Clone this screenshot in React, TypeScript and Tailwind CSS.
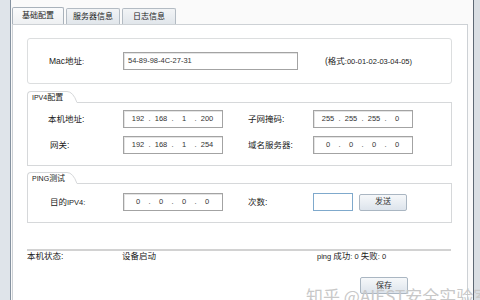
import { Fragment } from "react"

const IpBox = ({ parts }: { parts: string[] }) => (
  <div className="flex h-[18px] w-[100px] items-center border border-[#a3a3a3] bg-white pl-[5px] text-[7.5px] text-[#333] shadow-[inset_1px_1px_0_#e4e4e4]">
    {parts.map((p, i) => (
      <Fragment key={i}>
        {i > 0 && <span className="w-[5px] text-center">.</span>}
        <span className="w-[18px] text-center">{p}</span>
      </Fragment>
    ))}
  </div>
)

const GroupHeader = ({ children }: { children: React.ReactNode }) => (
  <div className="flex h-[12px]">
    <div className="flex w-[40px] items-center rounded-tl-[4px] border-t border-l border-[#d6d8da] pl-[4px] text-[8px] leading-none">
      {children}
    </div>
    <svg width="10" height="12" className="block shrink-0">
      <path d="M0 0.5 Q6 0.5 10 11.5" fill="none" stroke="#d6d8da" strokeWidth="1" />
    </svg>
    <div className="flex-1 border-b border-[#d6d8da]" />
  </div>
)

export default function App() {
  return (
    <div className="relative flex h-[300px] w-[480px] overflow-hidden bg-[#fafafa] font-['Liberation_Sans','Noto_Sans_CJK_SC',sans-serif] text-[8.5px] text-[#222]">
      <div className="w-[11px] shrink-0 border-r border-[#8592a0] bg-[#dfe4ea]" />

      <div className="w-[462px] shrink-0 pl-[1px] pt-[7px]">
        {/* tabs */}
        <div className="flex h-[17px] items-end">
          <div className="flex h-[17px] w-[52px] items-center justify-center rounded-t-[2px] border border-b-0 border-[#a9b2bb] bg-gradient-to-b from-[#fafbfc] to-[#eef0f2] text-[8px]">
            基础配置
          </div>
          <div className="ml-[2px] flex h-[16px] w-[54px] items-center justify-center rounded-t-[2px] border border-b-0 border-[#b3bbc3] bg-gradient-to-b from-[#f2f4f6] to-[#e1e6eb] text-[8px]">
            服务器信息
          </div>
          <div className="ml-[2px] flex h-[16px] w-[54px] items-center justify-center rounded-t-[2px] border border-b-0 border-[#b3bbc3] bg-gradient-to-b from-[#f2f4f6] to-[#e1e6eb] text-[8px]">
            日志信息
          </div>
        </div>

        {/* panel */}
        <div className="h-[290px] w-[456px] border border-[#cdd1d5] bg-white pl-[14px] pt-[13px]">
          {/* mac box */}
          <div className="flex h-[46px] w-[425px] items-center rounded-[3px] border border-[#dcdedf] pl-[21px]">
            <span className="w-[74px]">
              Mac地址<span className="text-[7.5px]">:</span>
            </span>
            <div className="flex h-[18px] w-[175px] items-center border border-[#a3a3a3] bg-white pl-[4px] text-[7.5px] text-[#333] shadow-[inset_1px_1px_0_#e4e4e4]">
              54-89-98-4C-27-31
            </div>
            <span className="ml-[27px]">
              (格式<span className="text-[7.5px]">:00-01-02-03-04-05)</span>
            </span>
          </div>

          {/* ipv4 */}
          <div className="mt-[7px] w-[425px]">
            <GroupHeader>
              <span className="text-[7px]">IPV4</span>配置
            </GroupHeader>
            <div className="h-[63px] border-x border-b border-[#d6d8da] pt-[7px]">
              <div className="flex items-center pl-[20px]">
                <span className="w-[75px]">本机地址:</span>
                <IpBox parts={["192", "168", "1", "200"]} />
                <span className="ml-[25px] w-[65px]">子网掩码:</span>
                <IpBox parts={["255", "255", "255", "0"]} />
              </div>
              <div className="mt-[8px] flex items-center pl-[20px]">
                <span className="w-[75px] pl-[2px]">网关:</span>
                <IpBox parts={["192", "168", "1", "254"]} />
                <span className="ml-[25px] w-[65px]">域名服务器:</span>
                <IpBox parts={["0", "0", "0", "0"]} />
              </div>
            </div>
          </div>

          {/* ping */}
          <div className="mt-[6px] w-[425px]">
            <GroupHeader>
              <span className="text-[7px]">PING</span>测试
            </GroupHeader>
            <div className="h-[39px] border-x border-b border-[#d6d8da] pt-[9px]">
              <div className="flex items-center pl-[22px]">
                <span className="w-[73px]">
                  目的<span className="text-[7.5px]">IPV4:</span>
                </span>
                <IpBox parts={["0", "0", "0", "0"]} />
                <span className="ml-[25px] w-[65px]">次数:</span>
                <div className="h-[18px] w-[40px] border border-[#7fa9cc] bg-white" />
                <button className="ml-[6px] h-[17px] w-[48px] rounded-[2px] border border-[#aab6c2] bg-gradient-to-b from-[#f6f8fa] to-[#dde4ec] text-[8px] text-[#333]">
                  发送
                </button>
              </div>
            </div>
          </div>

          {/* status */}
          <div className="mt-[26px] h-[2px] w-[424px] bg-[#d2d2d2]" />
          <div className="flex h-[11px] items-center">
            <span className="w-[95px]">本机状态:</span>
            <span className="w-[195px]">设备启动</span>
            <span>
              <span className="text-[7.5px]">ping </span>成功<span className="text-[7.5px]">: 0 </span>失败
              <span className="text-[7.5px]">: 0</span>
            </span>
          </div>
          <div className="mt-[15px] pl-[333px]">
            <button className="h-[17px] w-[48px] rounded-[2px] border border-[#aab6c2] bg-gradient-to-b from-[#f6f8fa] to-[#dde4ec] text-[8px] text-[#333]">
              保存
            </button>
          </div>
        </div>
      </div>

      <div className="flex-1 border-l border-[#5d6874] bg-[#d9dee3]" />

      {/* watermark */}
      <div className="pointer-events-none absolute left-[306px] top-[287px] whitespace-nowrap font-['Noto_Sans_CJK_SC',sans-serif] text-[17px] leading-none text-[#c8c8c8]">
        知乎 @AIEST安全实验室
      </div>
    </div>
  )
}
